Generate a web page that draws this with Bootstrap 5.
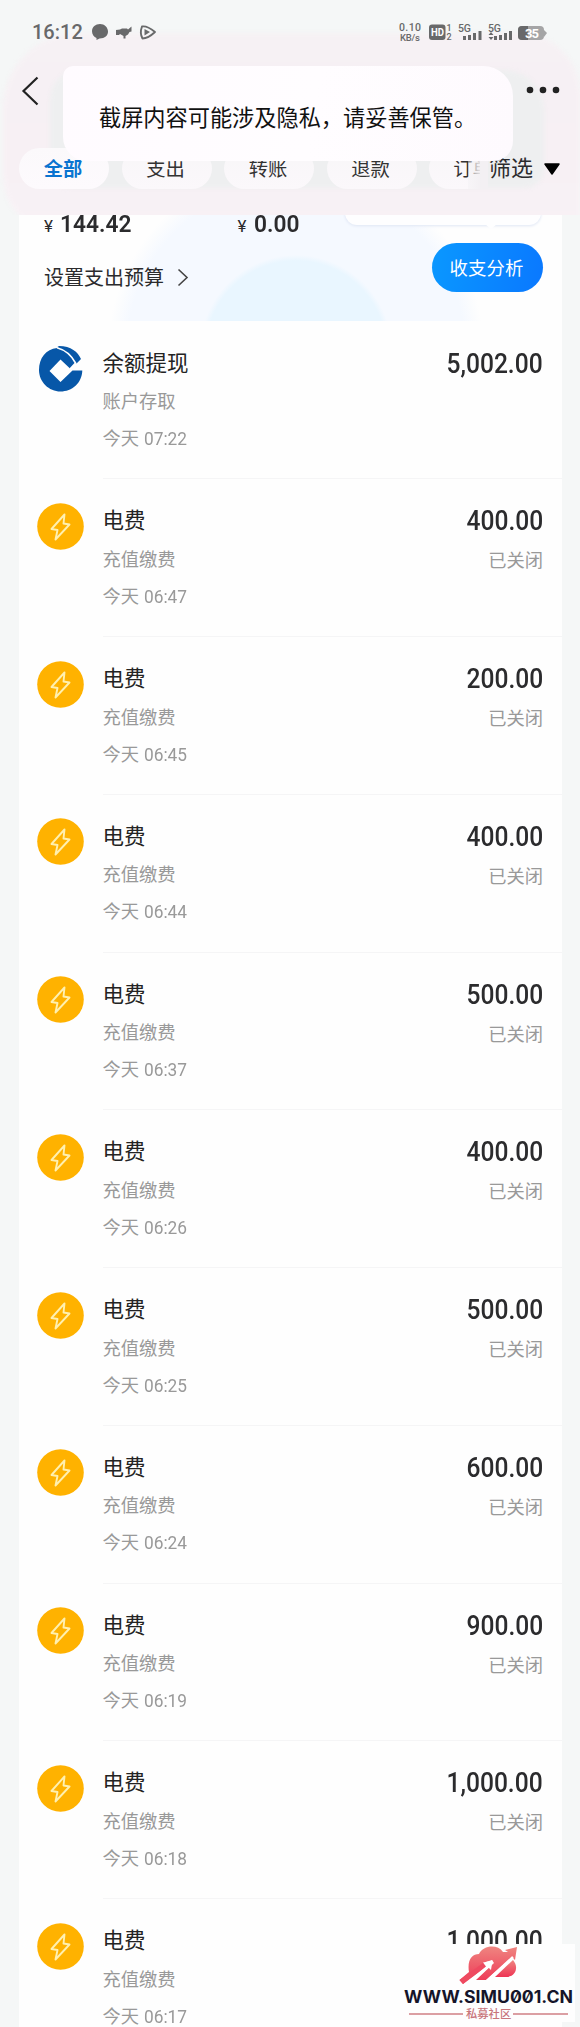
<!DOCTYPE html>
<html lang="zh-CN">
<head>
<meta charset="utf-8">
<meta name="viewport" content="width=device-width, initial-scale=1">
<title>账单</title>
<link href="https://cdn.jsdelivr.net/npm/bootstrap@5.3.0/dist/css/bootstrap.min.css" rel="stylesheet">
<style>
body{background:#f5f7f7;font-family:Roboto,"Noto Sans CJK SC",sans-serif;color:#2b2b2d;height:2027px;overflow:hidden;position:relative}
.topbar{height:215px;position:relative;overflow:hidden}
.glow{left:3px;right:0;top:33px;bottom:-20px;border-radius:75px 60px 0 60px;background:linear-gradient(#f6f1f4,#f7f0f4 60%,#f8f2f6);filter:blur(2px)}
.haze{left:50px;right:36px;top:70px;height:118px;border-radius:30px 40px 20px 20px;background:#eeeff0;filter:blur(2px)}
.status{height:64px;padding:0 33px 0 32px;color:#68696a;position:relative}
.clock{font-size:20px;font-weight:500;line-height:65px}
.navrow{height:52px;padding:0 21px;position:relative}
.tabs{height:41px;margin:32px 0 0 19px;gap:12.5px;width:461px;overflow:hidden;position:relative}
.tab-pill{flex:0 0 90px;height:41px;border-radius:21px;background:linear-gradient(#f8f6f8,#fbf8fb);font-size:19.3px;line-height:44px;text-align:center;color:#333;padding-right:2px}
.tab-pill.active{color:#0a74d0;font-weight:700;background:linear-gradient(#fbf9fb,#fdfafd)}
.fade-end{left:468px;width:20px;height:41px;top:148px;background:linear-gradient(90deg,rgba(242,241,243,.4),#f3f0f3 70%)}
.filter{left:489px;top:148px;height:41px;font-size:22px;line-height:43px}
.notice{left:63px;top:66px;width:450px;height:95px;border-radius:10px 30px 20px 24px;background:linear-gradient(100deg,#fffbff,#fffdff 55%,#fefafe);color:#111;font-size:22.2px;line-height:104px;padding-left:36px;white-space:nowrap}
.sheet{margin:0 18px 0 19px;height:1812px;background:#fefefe;overflow:hidden}
.summary{height:106px;padding:0 19px 0 25px;position:relative;overflow:hidden;background:radial-gradient(circle 96px at 277px 136px,#e9f6ff 94%,transparent),radial-gradient(circle 188px at 277px 136px,#f5f9ff 90%,transparent)}
.tipbox{left:326px;top:-20px;width:196px;height:30px;border-radius:12px;background:#fefeff;box-shadow:0 1px 3px #dfe6f4}
.tipbox::after{content:"";position:absolute;left:140px;top:29px;border:6px solid transparent;border-top:5px solid #fefeff}
.sum{font-size:24.5px;font-weight:500;line-height:28px;height:28px;margin-top:-5px}
.sum b{font-weight:600;display:inline-block;transform:scaleX(.93);transform-origin:0 50%;margin-left:1px}
.sum small{font-size:17px;font-weight:400}
.budget{font-size:20px;line-height:30px;height:30px;margin-top:19.500px}
.analysis{width:111px;height:49px;border-radius:25px;background:linear-gradient(100deg,#0a98ff,#0a78ff);color:#fff;font-size:18.4px;line-height:51px;text-align:center;letter-spacing:.1px;padding-right:2px}
.bill{height:157.75px;padding:25px 0 0 17.5px}
.bill>svg{flex:none;margin-top:-1px}
.bill-main{margin:-24.500px 0 0 19px;padding:26px 19px 0 0;border-bottom:1.500px solid #f5f5f6;height:157.75px}
.title{font-size:21.5px;line-height:32px;height:32px;color:#232323}
.sub{font-size:18.3px;line-height:26px;color:#999;margin-top:9.500px}
.when{margin-top:11px}
.when span{display:inline-block;font-size:19px;transform:scaleX(.91);transform-origin:0 50%}
.amount{font-size:27px;font-weight:500;line-height:33px;height:32px;transform:scaleX(.91);transform-origin:100% 50%}
.mark-box{left:400px;top:1944px;width:175px;height:78px;background:#fefefe}
</style>
</head>
<body>
<svg width="0" height="0" class="position-absolute"><defs>
<symbol id="bolt" viewBox="0 0 47 47"><circle cx="23.500" cy="23.500" r="23.300" fill="#ffb200"/><path d="M27.500 11.500 14.500 26 20.500 27 18.500 36.500 32.500 21.500 26.500 20.500Z" fill="none" stroke="#fff0b0" stroke-width="1.900" stroke-linejoin="round"/></symbol>
<symbol id="bank" viewBox="0 0 47 47"><path d="M20 3C9 4 2 13 2 25 2 37 12 46.500 23.500 46.500 35 46.500 45 38 45.300 25.500H35.500L23.500 37 12.500 26 23.500 14.500 33 23.500 39.500 17.500Q34 6 24 3Z" fill="#0757a8"/><path d="M22 1C34 1 41 7 44 14L39.500 18.500Q33 6 20 2.200Z" fill="#0757a8"/><path d="M20 2.800Q32 6 38.500 18L33 24" fill="none" stroke="#fff" stroke-width="1.600"/></symbol>
</defs></svg>
<header class="topbar">
  <div class="glow position-absolute"></div><div class="haze position-absolute"></div>
  <div class="status d-flex justify-content-between">
    <div class="d-flex"><span class="clock">16:12</span>
      <svg width="66" height="20" viewBox="90 22 66 20" style="margin:22px 0 0 8px" fill="#68696a"><path d="M99 24C94.500 24 91 27 91 31.300 91 34.500 93 37 95.500 38V40L98.500 38.500C104 38.500 107 35.500 107 31.500S103.500 24 99 24Z"/><path d="M115 30 119 29.500 121 28.500H126L127 29.500 130.500 26.500V31.500L128.500 32 127 34.500 124.500 36V38.500H122.500V36L119 34 118 35H115Z"/><path d="M141 26.500Q146 25.500 154 32 147 38.500 141.500 38.500 138.500 33 141 26.500Z" fill="none" stroke="#68696a" stroke-width="1.900" stroke-linejoin="round"/><path d="M143.500 29V35.500L149 32Z"/></svg>
    </div>
    <svg width="150" height="24" viewBox="398 20 150 24" style="margin-top:20px" fill="#68696a" font-family="Roboto,sans-serif" font-weight="500">
      <text x="400" y="31" font-size="10.500" textLength="22">0.10</text><text x="401" y="41" font-size="9.500" textLength="20">KB/s</text>
      <rect x="430" y="24.500" width="16.500" height="15.500" rx="3"/><text x="432" y="36.300" font-size="10.500" font-weight="700" fill="#fff" textLength="13" lengthAdjust="spacingAndGlyphs">HD</text>
      <text x="447.500" y="31" font-size="9">1</text><text x="447.500" y="40" font-size="9">2</text>
      <text x="459" y="31.500" font-size="10.500" textLength="13">5G</text><path d="M464 36h3v4h-3zM469 35h3v5h-3zM474 33h3v7h-3zM479.500 31h3v9h-3z"/>
      <text x="489" y="31.500" font-size="10.500" textLength="13">5G</text><path d="M489.500 35 492 32 494.500 35ZM489.500 37 492 40 494.500 37ZM495 36h3v4h-3zM500 35h3v5h-3zM505 33h3v7h-3zM510 31h3v9h-3z"/>
      <rect x="519" y="26" width="26" height="14" rx="4" fill="#a5a5a6"/><path d="M545 30 548 33 545 37Z" fill="#a5a5a6"/><path d="M523 26h6v14h-6a4 4 0 0 1-4-4v-6a4 4 0 0 1 4-4z"/><text x="526" y="38" font-size="13" font-weight="700" fill="#fff" textLength="14">35</text>
    </svg>
  </div>
  <nav class="navrow d-flex justify-content-between align-items-start">
    <svg width="20" height="30" viewBox="0 0 20 30" style="margin-top:11.500px"><path d="M16.500 1.500 2.500 15 16.500 28.500" fill="none" stroke="#222" stroke-width="2.200"/></svg>
    <svg width="34" height="8" viewBox="0 0 34 8" style="margin-top:22px;margin-right:-1px" fill="#222"><circle cx="4" cy="4" r="3.300"/><circle cx="17" cy="4" r="3.300"/><circle cx="30" cy="4" r="3.300"/></svg>
  </nav>
  <div class="tabs d-flex"><div class="tab-pill active">全部</div><div class="tab-pill">支出</div><div class="tab-pill">转账</div><div class="tab-pill">退款</div><div class="tab-pill" style="padding-right:3px">订单</div></div>
  <div class="fade-end position-absolute"></div>
  <div class="filter position-absolute d-flex align-items-center">筛选<svg width="16" height="12" viewBox="0 0 16 12" style="margin-left:11px"><path d="M1 1H15L8 11Z" stroke="#000" stroke-width="1.500" stroke-linejoin="round"/></svg></div>
  <div class="notice position-absolute">截屏内容可能涉及隐私，请妥善保管。</div>
</header>
<main class="sheet">
  <section class="summary">
    <div class="tipbox position-absolute"></div>
    <div class="d-flex"><div class="sum" style="width:193.500px"><small>¥</small> <b>144.42</b></div><div class="sum"><small>¥</small> <b>0.00</b></div></div>
    <div class="d-flex justify-content-between" style="margin-top:5px">
      <div class="budget d-flex align-items-center">设置支出预算<svg width="12" height="19" viewBox="0 0 12 19" style="margin-left:13px"><path d="M1.500 1.500 10 9.500 1.500 17.500" fill="none" stroke="#444" stroke-width="1.600"/></svg></div>
      <div class="analysis">收支分析</div>
    </div>
  </section>
  <div id="bills"></div>
</main>
<div class="mark-box position-absolute">
<svg width="175" height="78" viewBox="400 1944 175 78"><defs><linearGradient id="rg" x2="0" y2="1"><stop stop-color="#ef8580"/><stop offset="1" stop-color="#ee3454"/></linearGradient></defs>
<path d="M469 1972C467 1960 472 1954 479 1954 483 1945 498 1944 503 1952L508 1952 505 1950 517 1947 515 1960 512 1957 486 1980H476L494 1963 492 1960 483 1963 486 1965 463 1984 459.500 1980Z" fill="url(#rg)"/>
<path d="M495 1977 513 1960C519 1967 516 1977 506 1977Z" fill="url(#rg)"/>
<path d="M487 1981 513 1957" stroke="#fff" stroke-width="2.500"/>
<path d="M459.500 1980 485 1961.500 489 1965 463 1984Z" fill="#ee4a60"/>
<path d="M469.500 1980 486 1966.500 483 1962.500 492.500 1960.500 491 1970 488.500 1967.500 475 1980Z" fill="#fff"/>
<text x="404" y="2003" font-family="Inter,sans-serif" font-size="16.700" font-weight="700" fill="#15152a" textLength="169" lengthAdjust="spacingAndGlyphs" style="font-feature-settings:'zero'">WWW.SIMU001.CN</text>
<path d="M409 2014H463M513 2014H568" stroke="#cf8085" stroke-width="1.300"/>
<text x="466" y="2018.300" font-size="11.300" font-weight="500" font-family="Noto Sans CJK SC,sans-serif" fill="#c8757b">私募社区</text></svg>
</div>
<script>
const rows=[["余额提现","账户存取","07:22","5,002.00",""]].concat([["06:47","400.00"],["06:45","200.00"],["06:44","400.00"],["06:37","500.00"],["06:26","400.00"],["06:25","500.00"],["06:24","600.00"],["06:19","900.00"],["06:18","1,000.00"],["06:17","1,000.00"]].map(r=>["电费","充值缴费",r[0],r[1],"已关闭"]));
document.getElementById("bills").innerHTML=rows.map((r,i)=>`<article class="bill d-flex"><svg width="47" height="47"><use href="#${i?"bolt":"bank"}"/></svg><div class="bill-main d-flex flex-grow-1 justify-content-between"><div><div class="title">${r[0]}</div><div class="sub">${r[1]}</div><div class="sub when">今天 <span>${r[2]}</span></div></div><div class="text-end"><div class="amount">${r[3]}</div><div class="sub" style="margin-top:11px">${r[4]}</div></div></div></article>`).join("");
</script>
<script src="https://cdn.jsdelivr.net/npm/bootstrap@5.3.0/dist/js/bootstrap.bundle.min.js"></script>
</body>
</html>
